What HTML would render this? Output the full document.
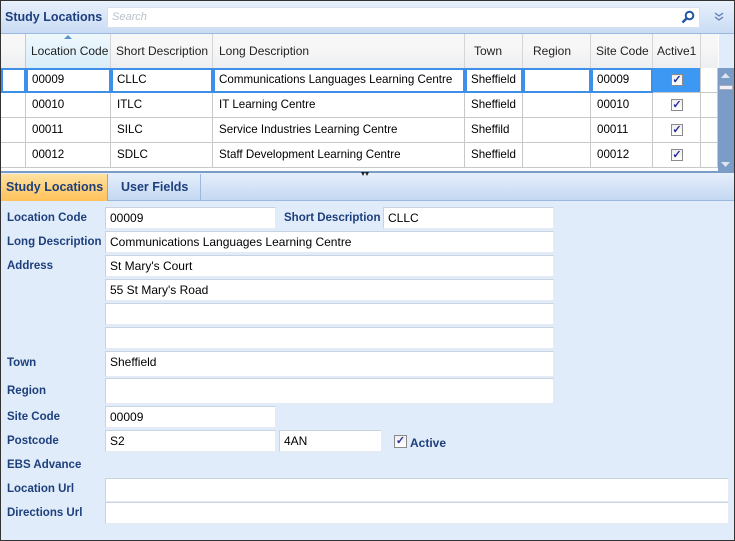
<!DOCTYPE html>
<html><head><meta charset="utf-8"><style>
*{box-sizing:border-box;margin:0;padding:0}
body{width:735px;height:541px;overflow:hidden;font-family:"Liberation Sans",sans-serif;font-size:12px;color:#000;background:#fff}
.a{position:absolute}
#frame{position:absolute;left:0;top:0;width:735px;height:541px;border:1px solid #333;background:#e1ecfa}
.hdr{left:0;top:0;width:733px;height:33px;background:linear-gradient(#e8f0fc,#c9dcf4);border-bottom:1px solid #9ab8e0}
.lbl{color:#1d3f7c;font-weight:bold;font-size:11.5px}
.inp{background:#fff;border:1px solid #c9d3e0;border-right-color:#e6ebf2;border-bottom-color:#e6ebf2;padding-left:4px;font-size:12px;line-height:20px}
.gh{top:34px;height:34px;background:linear-gradient(#f7f7f7,#f7f7f7 40%,#eceef0);border-right:1px solid #d5d5d5;padding-top:10px;font-size:12px;color:#222}
.cell{height:25px;border-right:1px solid #c8c8c8;border-bottom:1px solid #c8c8c8;line-height:24px;padding-left:6px;background:#fff;font-size:11.6px;white-space:nowrap;overflow:hidden}
.sel{border:2px solid #3d8fe8;line-height:20px;padding-left:4px}
.cb{width:12px;height:12px;border:1px solid #8a8a8a;background:linear-gradient(#eee,#fff);color:#2a2a9a;font-size:11px;line-height:10px;text-align:center;font-weight:bold}
</style></head><body>
<div id="frame">
<div class="a hdr"></div>
<div class="a" style="left:4px;top:9px;font-weight:bold;color:#1d3f7c;font-size:12.5px">Study Locations</div>
<div class="a" style="left:106px;top:6px;width:593px;height:21px;background:#fff;border:1px solid #d8e2ee"></div>
<div class="a" style="left:111px;top:10px;color:#b8c0cc;font-style:italic;font-size:11px">Search</div>
<svg class="a" style="left:680px;top:9px" width="14" height="14"><circle cx="8.5" cy="5.5" r="3.8" fill="none" stroke="#1f56a8" stroke-width="2"/><line x1="6" y1="8" x2="1.5" y2="12.5" stroke="#1f56a8" stroke-width="2.4"/></svg>
<svg class="a" style="left:713px;top:11px" width="10" height="10"><path d="M1 1l4 3 4-3M1 5l4 3 4-3" fill="none" stroke="#5a7bb0" stroke-width="1.2"/></svg>

<div class="a" style="left:0;top:33px;width:718px;height:139px;background:#fff"></div>
<div class="a gh" style="left:0;top:33px;width:25px;border-right-color:#bcd"></div>
<div class="a gh" style="left:25px;top:33px;width:85px;background:linear-gradient(#eef8fd,#d9eef9);padding-left:5px">Location Code</div>
<svg class="a" style="left:63px;top:34px" width="8" height="4"><path d="M0 4L4 0 8 4z" fill="#5a95c8"/></svg>
<div class="a gh" style="left:110px;top:33px;width:102px;padding-left:5px">Short Description</div>
<div class="a gh" style="left:212px;top:33px;width:252px;padding-left:6px">Long Description</div>
<div class="a gh" style="left:464px;top:33px;width:58px;padding-left:9px">Town</div>
<div class="a gh" style="left:522px;top:33px;width:68px;padding-left:10px">Region</div>
<div class="a gh" style="left:590px;top:33px;width:62px;padding-left:5px">Site Code</div>
<div class="a gh" style="left:652px;top:33px;width:48px;padding-left:4px">Active1</div>
<div class="a gh" style="left:700px;top:33px;width:17px;border-right:none"></div>

<div class="a" style="left:0;top:67px;width:718px">
<div style="display:flex"><div class="cell sel" style="width:25px"></div><div class="cell sel" style="width:85px">00009</div><div class="cell sel" style="width:102px">CLLC</div><div class="cell sel" style="width:252px">Communications Languages Learning Centre</div><div class="cell sel" style="width:58px">Sheffield</div><div class="cell sel" style="width:68px"></div><div class="cell sel" style="width:62px">00009</div><div class="cell" style="width:48px;background:#3d98f4;padding:6px 0 0 18px"><div class="cb">✓</div></div><div class="cell" style="width:17px"></div></div>
<div style="display:flex"><div class="cell" style="width:25px"></div><div class="cell" style="width:85px">00010</div><div class="cell" style="width:102px">ITLC</div><div class="cell" style="width:252px">IT Learning Centre</div><div class="cell" style="width:58px">Sheffield</div><div class="cell" style="width:68px"></div><div class="cell" style="width:62px">00010</div><div class="cell" style="width:48px;padding:6px 0 0 18px"><div class="cb">✓</div></div><div class="cell" style="width:17px"></div></div>
<div style="display:flex"><div class="cell" style="width:25px"></div><div class="cell" style="width:85px">00011</div><div class="cell" style="width:102px">SILC</div><div class="cell" style="width:252px">Service Industries Learning Centre</div><div class="cell" style="width:58px">Sheffild</div><div class="cell" style="width:68px"></div><div class="cell" style="width:62px">00011</div><div class="cell" style="width:48px;padding:6px 0 0 18px"><div class="cb">✓</div></div><div class="cell" style="width:17px"></div></div>
<div style="display:flex"><div class="cell" style="width:25px"></div><div class="cell" style="width:85px">00012</div><div class="cell" style="width:102px">SDLC</div><div class="cell" style="width:252px">Staff Development Learning Centre</div><div class="cell" style="width:58px">Sheffield</div><div class="cell" style="width:68px"></div><div class="cell" style="width:62px">00012</div><div class="cell" style="width:48px;padding:6px 0 0 18px"><div class="cb">✓</div></div><div class="cell" style="width:17px"></div></div>
</div>
<div class="a" style="left:717px;top:67px;width:16px;height:105px;background:#7b9cc6"></div>
<svg class="a" style="left:720px;top:72px" width="9" height="5"><path d="M0 5L4.5 0 9 5z" fill="#dde6f3"/></svg>
<div class="a" style="left:718px;top:84px;width:14px;height:5px;background:#eef2f8;border:1px solid #aab"></div>
<svg class="a" style="left:720px;top:161px" width="9" height="5"><path d="M0 0L4.5 5 9 0z" fill="#dde6f3"/></svg>
<div class="a" style="left:0;top:170px;width:733px;height:2px;background:#7b9cc6"></div>

<div class="a" style="left:0;top:172px;width:733px;height:28px;background:linear-gradient(#e6effb,#c4d8f2);border-bottom:1px solid #9ab8e0"></div>
<div class="a" style="left:0;top:173px;width:107px;height:27px;background:linear-gradient(#ffe1a0,#ffc25a);border-right:1px solid #d7a04a;color:#1d3f7c;font-weight:bold;font-size:12.5px;padding:6px 0 0 5px">Study Locations</div>
<div class="a" style="left:107px;top:173px;width:93px;height:27px;border-right:1px solid #9ab8e0;color:#1d3f7c;font-weight:bold;font-size:12.5px;padding:6px 0 0 13px">User Fields</div>
<svg class="a" style="left:359px;top:171px" width="10" height="5"><path d="M1 0l2 4 2-4M5 0l2 4 2-4" fill="#222"/></svg>

<div class="a lbl" style="left:6px;top:211px">Location Code</div>
<div class="a inp" style="left:104px;top:206px;width:171px;height:22px">00009</div>
<div class="a lbl" style="left:283px;top:211px">Short Description</div>
<div class="a inp" style="left:382px;top:206px;width:171px;height:22px">CLLC</div>
<div class="a lbl" style="left:6px;top:235px">Long Description</div>
<div class="a inp" style="left:104px;top:230px;width:449px;height:22px">Communications Languages Learning Centre</div>
<div class="a lbl" style="left:6px;top:259px">Address</div>
<div class="a inp" style="left:104px;top:254px;width:449px;height:22px">St Mary's Court</div>
<div class="a inp" style="left:104px;top:278px;width:449px;height:22px">55 St Mary's Road</div>
<div class="a inp" style="left:104px;top:302px;width:449px;height:22px"></div>
<div class="a inp" style="left:104px;top:326px;width:449px;height:22px"></div>
<div class="a lbl" style="left:6px;top:356px">Town</div>
<div class="a inp" style="left:104px;top:350px;width:449px;height:26px;line-height:20px">Sheffield</div>
<div class="a lbl" style="left:6px;top:384px">Region</div>
<div class="a inp" style="left:104px;top:377px;width:449px;height:26px"></div>
<div class="a lbl" style="left:6px;top:410px">Site Code</div>
<div class="a inp" style="left:104px;top:405px;width:171px;height:22px">00009</div>
<div class="a lbl" style="left:6px;top:434px">Postcode</div>
<div class="a inp" style="left:104px;top:429px;width:171px;height:22px">S2</div>
<div class="a inp" style="left:278px;top:429px;width:103px;height:22px">4AN</div>
<div class="a cb" style="left:393px;top:434px;width:13px;height:13px">✓</div>
<div class="a lbl" style="left:409px;top:435px;font-size:12px">Active</div>
<div class="a lbl" style="left:6px;top:458px">EBS Advance</div>
<div class="a lbl" style="left:6px;top:482px">Location Url</div>
<div class="a inp" style="left:104px;top:477px;width:624px;height:24px"></div>
<div class="a lbl" style="left:6px;top:506px">Directions Url</div>
<div class="a inp" style="left:104px;top:501px;width:624px;height:22px"></div>
</div>
</body></html>
